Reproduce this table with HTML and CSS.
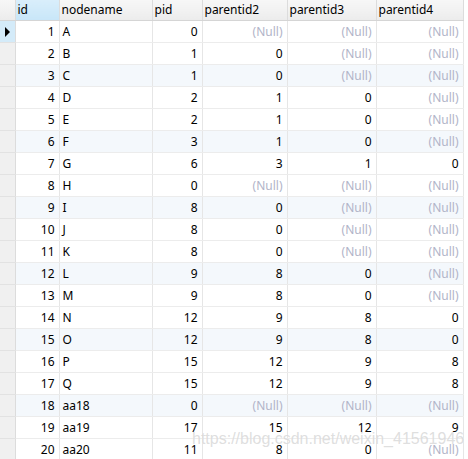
FILE: index.html
```html
<!DOCTYPE html>
<html>
<head>
<meta charset="utf-8">
<link rel="stylesheet" href="styles.css">
</head>
<body>
<div class="wrap">
<table class="grid">
<colgroup>
<col class="c-ind"><col class="c-id"><col class="c-name"><col class="c-pid"><col class="c-p2"><col class="c-p3"><col class="c-p4">
</colgroup>
<thead>
<tr><th class="ind"></th><th class="sel">id</th><th>nodename</th><th>pid</th><th>parentid2</th><th>parentid3</th><th>parentid4</th></tr>
</thead>
<tbody>
<tr><td class="ind cur"><span class="tri"></span></td><td class="n">1</td><td>A</td><td class="n">0</td><td class="n null">(Null)</td><td class="n null">(Null)</td><td class="n null">(Null)</td></tr>
<tr><td class="ind"></td><td class="n">2</td><td>B</td><td class="n">1</td><td class="n">0</td><td class="n null">(Null)</td><td class="n null">(Null)</td></tr>
<tr class="alt"><td class="ind"></td><td class="n">3</td><td>C</td><td class="n">1</td><td class="n">0</td><td class="n null">(Null)</td><td class="n null">(Null)</td></tr>
<tr><td class="ind"></td><td class="n">4</td><td>D</td><td class="n">2</td><td class="n">1</td><td class="n">0</td><td class="n null">(Null)</td></tr>
<tr><td class="ind"></td><td class="n">5</td><td>E</td><td class="n">2</td><td class="n">1</td><td class="n">0</td><td class="n null">(Null)</td></tr>
<tr class="alt"><td class="ind"></td><td class="n">6</td><td>F</td><td class="n">3</td><td class="n">1</td><td class="n">0</td><td class="n null">(Null)</td></tr>
<tr><td class="ind"></td><td class="n">7</td><td>G</td><td class="n">6</td><td class="n">3</td><td class="n">1</td><td class="n">0</td></tr>
<tr><td class="ind"></td><td class="n">8</td><td>H</td><td class="n">0</td><td class="n null">(Null)</td><td class="n null">(Null)</td><td class="n null">(Null)</td></tr>
<tr class="alt"><td class="ind"></td><td class="n">9</td><td>I</td><td class="n">8</td><td class="n">0</td><td class="n null">(Null)</td><td class="n null">(Null)</td></tr>
<tr><td class="ind"></td><td class="n">10</td><td>J</td><td class="n">8</td><td class="n">0</td><td class="n null">(Null)</td><td class="n null">(Null)</td></tr>
<tr><td class="ind"></td><td class="n">11</td><td>K</td><td class="n">8</td><td class="n">0</td><td class="n null">(Null)</td><td class="n null">(Null)</td></tr>
<tr class="alt"><td class="ind"></td><td class="n">12</td><td>L</td><td class="n">9</td><td class="n">8</td><td class="n">0</td><td class="n null">(Null)</td></tr>
<tr><td class="ind"></td><td class="n">13</td><td>M</td><td class="n">9</td><td class="n">8</td><td class="n">0</td><td class="n null">(Null)</td></tr>
<tr><td class="ind"></td><td class="n">14</td><td>N</td><td class="n">12</td><td class="n">9</td><td class="n">8</td><td class="n">0</td></tr>
<tr class="alt"><td class="ind"></td><td class="n">15</td><td>O</td><td class="n">12</td><td class="n">9</td><td class="n">8</td><td class="n">0</td></tr>
<tr><td class="ind"></td><td class="n">16</td><td>P</td><td class="n">15</td><td class="n">12</td><td class="n">9</td><td class="n">8</td></tr>
<tr><td class="ind"></td><td class="n">17</td><td>Q</td><td class="n">15</td><td class="n">12</td><td class="n">9</td><td class="n">8</td></tr>
<tr class="alt"><td class="ind"></td><td class="n">18</td><td>aa18</td><td class="n">0</td><td class="n null">(Null)</td><td class="n null">(Null)</td><td class="n null">(Null)</td></tr>
<tr><td class="ind"></td><td class="n">19</td><td>aa19</td><td class="n">17</td><td class="n">15</td><td class="n">12</td><td class="n">9</td></tr>
<tr><td class="ind"></td><td class="n">20</td><td>aa20</td><td class="n">11</td><td class="n">8</td><td class="n">0</td><td class="n null">(Null)</td></tr>
</tbody>
</table>
<div class="watermark">https://blog.csdn.net/weixin_41561946</div>
</div>
</body>
</html>
```

FILE: styles.css
```css
html, body {
  margin: 0;
  padding: 0;
  background: #ffffff;
}
.wrap {
  position: relative;
  width: 468px;
  height: 459px;
  overflow: hidden;
}
.grid {
  border-collapse: collapse;
  table-layout: fixed;
  width: 463px;
  font-family: "Noto Sans", "Open Sans", sans-serif;
  font-size: 12px;
  color: #000;
}
.c-ind { width: 15px; }
.c-id { width: 44px; }
.c-name { width: 93px; }
.c-pid { width: 50px; }
.c-p2 { width: 85px; }
.c-p3 { width: 89px; }
.c-p4 { width: 87px; }
.grid th {
  height: 20px;
  padding: 0 0 0 2px;
  text-align: left;
  font-weight: normal;
  background: linear-gradient(#f7f7f7, #ececec);
  border-right: 1px solid #dcdcdc;
  border-bottom: 1px solid #d5d5d5;
  white-space: nowrap;
  overflow: hidden;
  line-height: 20px;
}
.grid th.sel {
  background: linear-gradient(#d9eefb, #c8e6f8);
}
.grid td {
  height: 21px;
  padding: 0 3px;
  border-right: 1px solid #e6e6e6;
  border-bottom: 1px solid #ececec;
  white-space: nowrap;
  overflow: hidden;
  line-height: 21px;
}
.grid td.n { text-align: right; padding-right: 4px; }
.grid td.null { color: #b1b4c8; }
.grid tr.alt td { background: #f4f8fc; }
.grid td.ind, .grid tr.alt td.ind {
  background: #f0f0f0;
  border-right: 1px solid #dcdcdc;
  border-bottom: 1px solid #e2e2e2;
  padding: 0;
}
.grid td.ind.cur {
  background: #d4ebf9;
}
.tri {
  display: block;
  width: 0;
  height: 0;
  margin-left: 5px;
  border-top: 5px solid transparent;
  border-bottom: 5px solid transparent;
  border-left: 5px solid #000;
}
.watermark {
  position: absolute;
  left: 192px;
  top: 430px;
  font-family: "Liberation Sans", Arial, sans-serif;
  font-size: 16px;
  color: rgba(195, 195, 195, 0.55);
  text-shadow: 0 0 1px rgba(255,255,255,0.8);
  white-space: nowrap;
}
```
